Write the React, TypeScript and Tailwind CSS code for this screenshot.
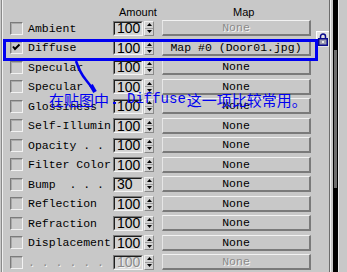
import type { ReactNode } from 'react';

interface MapRow {
  label: string;
  amount: string;
  map: string;
  checked?: boolean;
  mapDisabled?: boolean;
  disabled?: boolean;
}

const ROWS: MapRow[] = [
  { label: 'Ambient', amount: '100', map: 'None', mapDisabled: true },
  { label: 'Diffuse', amount: '100', map: 'Map #0 (Door01.jpg)', checked: true },
  { label: 'Specular', amount: '100', map: 'None' },
  { label: 'Specular', amount: '100', map: 'None' },
  { label: 'Glossiness', amount: '100', map: 'None' },
  { label: 'Self-Illumin', amount: '100', map: 'None' },
  { label: 'Opacity . .', amount: '100', map: 'None' },
  { label: 'Filter Color', amount: '100', map: 'None' },
  { label: 'Bump  . . .', amount: '30', map: 'None' },
  { label: 'Reflection', amount: '100', map: 'None' },
  { label: 'Refraction', amount: '100', map: 'None' },
  { label: 'Displacement', amount: '100', map: 'None' },
  { label: '. . . . . .', amount: '100', map: 'None', disabled: true },
];

const mono = "font-['Liberation_Mono','Courier_New',monospace]";
const sans = "font-['Liberation_Sans',Arial,sans-serif]";
const dimText = 'text-[#8a8a8a] [text-shadow:1px_1px_0_#f4f4f4]';

function Checkbox({ checked, disabled }: { checked?: boolean; disabled?: boolean }) {
  return (
    <div
      className={`w-[13px] h-[13px] shrink-0 border border-t-[#7b7b7b] border-l-[#7b7b7b] border-r-[#f2f2f2] border-b-[#f2f2f2] shadow-[inset_1px_1px_0_#a9a9a9] ${
        disabled ? 'bg-[#c8c8c8]' : 'bg-[#cbcbcb]'
      }`}
    >
      {checked && (
        <svg width="11" height="11" viewBox="0 0 11 11">
          <path d="M2 4.5 L4 7 L8.5 2.5" fill="none" stroke="#000" strokeWidth="2" />
        </svg>
      )}
    </div>
  );
}

function Spinner() {
  return (
    <div className="ml-px w-[10px] h-[15px] flex flex-col bg-[#d2d2d2] border-t border-l border-t-[#f0f0f0] border-l-[#f0f0f0] border-r border-b border-r-[#8a8a8a] border-b-[#8a8a8a]">
      <div className="flex-1 flex items-center justify-center border-b border-[#9c9c9c]">
        <svg width="5" height="3" viewBox="0 0 5 3">
          <path d="M2.5 0 L5 3 L0 3 Z" fill="#000" />
        </svg>
      </div>
      <div className="flex-1 flex items-center justify-center">
        <svg width="5" height="3" viewBox="0 0 5 3">
          <path d="M0 0 L5 0 L2.5 3 Z" fill="#000" />
        </svg>
      </div>
    </div>
  );
}

function AmountBox({ value, disabled }: { value: string; disabled?: boolean }) {
  return (
    <div className="w-[30px] h-[15px] border border-t-[#7b7b7b] border-l-[#7b7b7b] border-r-[#f4f4f4] border-b-[#f4f4f4]">
      <div
        className={`h-full border border-t-[#1e1e1e] border-l-[#1e1e1e] border-r-[#d8d8d8] border-b-[#d8d8d8] bg-[#d2d2d2] pl-[2px] flex items-center text-[14px] leading-none ${sans} ${
          disabled ? dimText : 'text-black'
        }`}
      >
        {value}
      </div>
    </div>
  );
}

function MapButton({ children, disabled }: { children: ReactNode; disabled?: boolean }) {
  return (
    <div
      className={`ml-[8px] w-[149px] h-[16px] flex items-center justify-center bg-[#c8c8c8] border-t border-l border-t-[#f2f2f2] border-l-[#e6e6e6] border-r-2 border-b-2 border-r-[#7a7a7a] border-b-[#7a7a7a] text-[11.5px] leading-none whitespace-pre ${mono} ${
        disabled ? dimText : 'text-black'
      }`}
    >
      {children}
    </div>
  );
}

function LockButton() {
  return (
    <div className="absolute left-[313px] top-[12px] w-[13px] h-[16px] bg-[#e4e4e4] border-t border-l border-[#ffffff] flex items-end justify-center pb-px">
      <svg width="10" height="13" viewBox="0 0 10 13">
        <path d="M2.5 6 V3.5 a2.5 2.5 0 0 1 5 0 V6" fill="none" stroke="#0a0a8c" strokeWidth="1.5" />
        <rect x="0.75" y="5.75" width="8.5" height="6.5" fill="#9a9aae" stroke="#0a0a8c" strokeWidth="1.5" />
        <rect x="4" y="8" width="2" height="2" fill="#e8e8e8" />
      </svg>
    </div>
  );
}

function Row({ row }: { row: MapRow }) {
  return (
    <div className="h-[19.5px] flex items-center">
      <div className="ml-[7px]">
        <Checkbox checked={row.checked} disabled={row.disabled} />
      </div>
      <div
        className={`ml-[5px] w-[85px] text-[11.5px] leading-none whitespace-pre ${mono} ${
          row.disabled ? dimText : 'text-black'
        }`}
      >
        {row.label}
      </div>
      <AmountBox value={row.amount} disabled={row.disabled} />
      <Spinner />
      <MapButton disabled={row.mapDisabled || row.disabled}>{row.map}</MapButton>
    </div>
  );
}

function Scrollbar() {
  return (
    <div className="w-[18px] h-full flex border-l border-[#6c6c6c]">
      <div className="w-px bg-[#f0f0f0]" />
      <div className="w-[2px]" />
      <div className="w-[5px] h-full bg-black flex flex-col items-center">
        <div className="h-[50px]" />
        <div className="w-[3px] h-[138px] bg-[#6e6e6e]" />
      </div>
      <div className="w-px bg-[#e8e8e8]" />
    </div>
  );
}

export default function App() {
  return (
    <div className="w-[347px] h-[272px] bg-[#c8c8c8] overflow-hidden relative flex">
      <div className="w-[329px] h-full flex">
        <div className="w-px" />
        <div className="w-px bg-[#8a8a8a]" />
        <div className="w-px bg-[#f0f0f0]" />
        <div className="flex-1 flex flex-col">
          <div className={`h-[21px] relative text-[11px] text-black ${sans}`}>
            <span className="absolute left-[116px] top-[4px]">Amount</span>
            <span className="absolute left-[230px] top-[4px]">Map</span>
          </div>
          <div className="relative">
            {ROWS.map((row, i) => (
              <Row key={i} row={row} />
            ))}
            <LockButton />
          </div>
        </div>
      </div>
      <Scrollbar />

      {/* blue annotation drawn over the panel */}
      <div className="absolute left-[3px] top-[39px] w-[315px] h-[22px] border-[3px] border-[#0000f0] pointer-events-none" />
      <svg className="absolute left-0 top-0 pointer-events-none" width="347" height="272">
        <path d="M76 61 Q80 73 86 80 L93 89" fill="none" stroke="#0000f0" strokeWidth="2.5" />
        <path d="M91 85 L95 92" fill="none" stroke="#0000f0" strokeWidth="4" />
        <rect x="113" y="102" width="3" height="2" fill="#0000f0" />
      </svg>
      <div className="absolute left-[49px] top-[92px] h-[15px] flex items-center whitespace-pre text-[#0000f0] leading-[15px]">
        <span className="font-['Noto_Sans_CJK_SC',sans-serif] text-[15px]">在贴图中</span>
        <span className={`ml-[18px] text-[14px] ${mono}`}>Diffuse</span>
        <span className="ml-[1px] font-['Noto_Sans_CJK_SC',sans-serif] text-[15px]">这一项比较常用。</span>
      </div>
    </div>
  );
}
